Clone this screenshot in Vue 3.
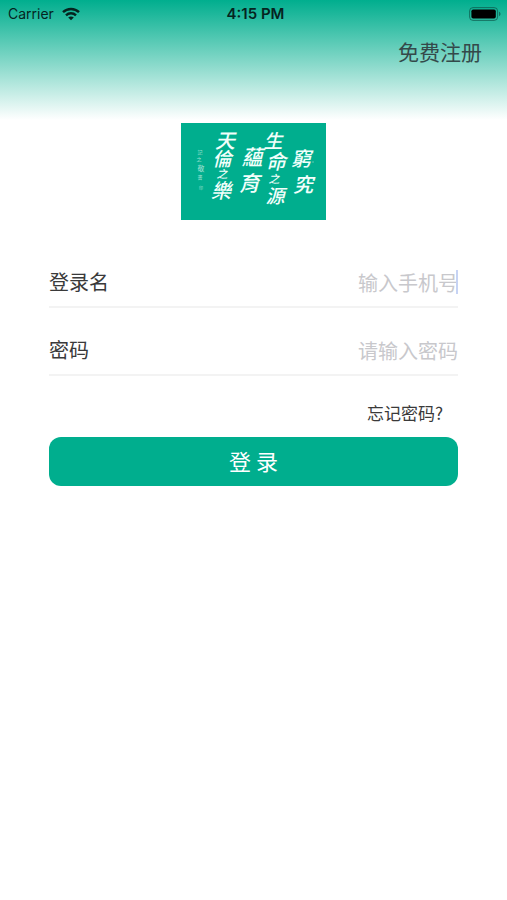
<script setup>
import { ref } from 'vue'

const account = ref('')
const password = ref('')

const brush = [
  { char: '天', x: 44, y: 18, size: 20 },
  { char: '倫', x: 41, y: 36, size: 19 },
  { char: '之', x: 41, y: 51, size: 11 },
  { char: '樂', x: 40, y: 68, size: 20 },
  { char: '蘊', x: 71, y: 34, size: 21 },
  { char: '育', x: 68, y: 60, size: 21 },
  { char: '生', x: 92, y: 18, size: 19 },
  { char: '命', x: 95, y: 39, size: 20 },
  { char: '之', x: 93, y: 56, size: 11 },
  { char: '源', x: 94, y: 73, size: 19 },
  { char: '窮', x: 120, y: 36, size: 20 },
  { char: '究', x: 122, y: 62, size: 20 },
]
</script>

<template>
  <div class="screen">
    <header class="top">
      <div class="status">
        <div class="carrier">
          <span>Carrier</span>
          <svg width="18" height="14" viewBox="0 0 18 14" fill="none" stroke="currentColor" stroke-width="2.4">
            <path d="M1 5.2C5.4.9 12.6.9 17 5.2" />
            <path d="M4 8.3c2.8-2.7 7.2-2.7 10 0" />
            <path d="M6.2 10.5c1.6-1.5 4-1.5 5.6 0L9 13.3z" fill="currentColor" stroke="none" />
          </svg>
        </div>
        <time class="clock">4:15 PM</time>
        <div class="battery">
          <svg width="32" height="14" viewBox="0 0 32 14">
            <rect x="0.6" y="0.6" width="28" height="12.8" rx="3.4" fill="none" stroke="#0a4b40" stroke-opacity="0.65" />
            <rect x="2.4" y="2.4" width="24.4" height="9.2" rx="1.8" fill="#000" />
            <path d="M30 4.8c2 .7 2 3.7 0 4.4z" fill="#0a4b40" fill-opacity="0.65" />
          </svg>
        </div>
      </div>
      <nav class="nav">
        <a class="register" href="#">免费注册</a>
      </nav>
    </header>

    <main class="content">
      <svg class="logo" width="145" height="97" viewBox="0 0 145 97" role="img">
        <rect width="145" height="97" fill="#00ae8e" />
        <g class="brush">
          <text
            v-for="(b, i) in brush"
            :key="i"
            :x="b.x"
            :y="b.y + b.size * 0.37"
            :font-size="b.size"
          >{{ b.char }}</text>
        </g>
        <g class="signature">
          <text x="19" y="31">記</text>
          <text x="18" y="38">之</text>
          <text x="20" y="48" font-size="7">敬</text>
          <text x="19" y="56">書</text>
          <text x="20" y="67" font-size="4">印</text>
        </g>
        <circle cx="132" cy="39" r="0.8" fill="#6fcdb9" />
      </svg>

      <form class="form" @submit.prevent>
        <div class="field">
          <label for="account">登录名</label>
          <input id="account" v-model="account" type="tel" placeholder="输入手机号" />
          <span class="caret"></span>
        </div>
        <div class="field">
          <label for="password">密码</label>
          <input id="password" v-model="password" type="password" placeholder="请输入密码" />
        </div>
        <a class="forgot" href="#">忘记密码?</a>
        <button class="submit" type="submit">登 录</button>
      </form>
    </main>
  </div>
</template>

<style>
body {
  background: #fff;
}
</style>

<style scoped>
.screen {
  font-family: "Noto Sans CJK SC", sans-serif;
  color: #3a3a3a;
}

.top {
  height: 123px;
  background: linear-gradient(#00ae8e, #fff 120px);
}

.status {
  display: grid;
  grid-template-columns: 1fr auto 1fr;
  align-items: center;
  height: 28px;
  padding: 0 4px 0 8px;
  font-family: Inter, sans-serif;
  font-size: 14px;
  line-height: 28px;
  color: #05241f;
}

.carrier {
  display: flex;
  align-items: center;
  gap: 8px;
}

.clock {
  font-size: 15px;
  font-weight: 600;
}

.battery {
  display: flex;
  justify-content: flex-end;
  padding-right: 2px;
}

.nav {
  display: flex;
  justify-content: flex-end;
  padding: 7px 25px 0;
}

.register {
  font-size: 21px;
  line-height: 32px;
  color: #34494a;
  text-decoration: none;
}

.content {
  display: flex;
  flex-direction: column;
  align-items: center;
  padding: 0 49px;
}

.logo {
  display: block;
}

.brush {
  font-family: "Noto Sans CJK TC", sans-serif;
  font-style: italic;
  font-weight: 500;
  fill: #f2fffb;
  text-anchor: middle;
}

.signature {
  font-family: "Noto Sans CJK TC", sans-serif;
  font-size: 5px;
  fill: #a5e2d5;
  text-anchor: middle;
}

.form {
  display: flex;
  flex-direction: column;
  align-self: stretch;
  padding-top: 20px;
}

.field {
  position: relative;
  display: flex;
  align-items: flex-end;
  height: 66px;
  border-bottom: 2px solid #f3f3f3;
}

.field label {
  flex: none;
  font-size: 20px;
  line-height: 48px;
}

.field input {
  flex: 1;
  min-width: 0;
  height: 48px;
  padding: 0;
  border: 0;
  outline: 0;
  background: transparent;
  font: inherit;
  font-size: 20px;
  color: #3a3a3a;
  text-align: right;
}

.field input::placeholder {
  color: #c8c8cc;
  opacity: 1;
}

.caret {
  position: absolute;
  right: 0;
  bottom: 12px;
  width: 2px;
  height: 24px;
  background: #c6d3f4;
}

.forgot {
  align-self: flex-end;
  padding: 24px 15px 12px;
  font-size: 17px;
  line-height: 25px;
  color: #3a3a3a;
  text-decoration: none;
}

.submit {
  height: 49px;
  padding: 0 0 4px;
  border: 0;
  border-radius: 12px;
  background: #00ae8e;
  font: inherit;
  font-size: 22px;
  color: #fff;
}
</style>
